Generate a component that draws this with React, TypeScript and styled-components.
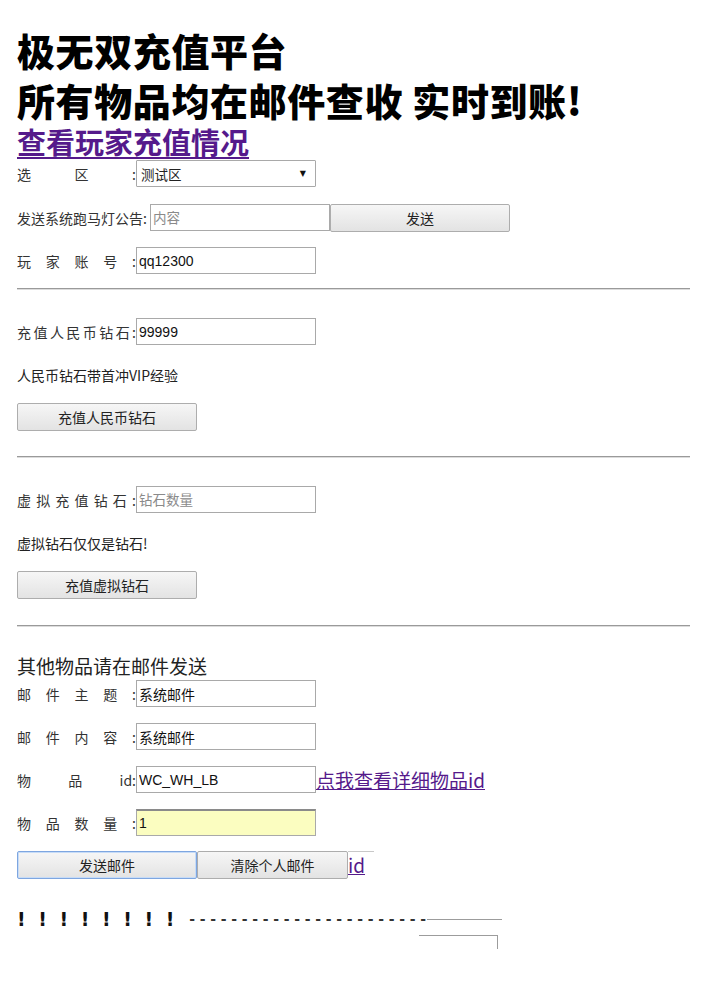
import React from 'react';
import styled, { createGlobalStyle } from 'styled-components';

const GlobalStyle = createGlobalStyle`
  html, body {
    margin: 0;
    padding: 0;
    background: #fff;
  }
  body {
    font-family: "Liberation Sans", "Noto Sans CJK SC", sans-serif;
    color: #222;
  }
`;

const Page = styled.div`
  padding: 25px 16px 40px 17px;
`;

const Title = styled.h1`
  margin: 0;
  font-family: "Noto Sans CJK SC", sans-serif;
  font-size: 38px;
  font-weight: 900;
  line-height: 50px;
  color: #000;
  letter-spacing: 0.6px;
`;

const BigLink = styled.a`
  display: block;
  font-family: "Noto Sans CJK SC", sans-serif;
  font-size: 29px;
  font-weight: 700;
  line-height: 32px;
  color: #551a8b;
  text-decoration: underline;
  text-decoration-thickness: 2px;
  text-underline-offset: 3px;
  width: max-content;
`;

const Row = styled.div<{ $mt: number }>`
  display: flex;
  align-items: center;
  height: 27px;
  margin-top: ${(p) => p.$mt}px;
`;

const Label = styled.span<{ $w?: number }>`
  display: inline-flex;
  justify-content: space-between;
  width: ${(p) => (p.$w ? `${p.$w}px` : '119px')};
  font-family: "Noto Sans CJK SC", sans-serif;
  font-size: 14px;
  color: #333;
  flex-shrink: 0;
  white-space: nowrap;
`;

const Field = styled.input<{ $hl?: boolean }>`
  box-sizing: border-box;
  width: 180px;
  height: 27px;
  margin: 0;
  padding: 1px 2px;
  border: 1px solid #a9a9a9;
  border-top-color: ${(p) => (p.$hl ? '#8a8a8a' : '#a9a9a9')};
  border-top-width: ${(p) => (p.$hl ? '2px' : '1px')};
  background: ${(p) => (p.$hl ? '#fbfdc0' : '#fff')};
  font-family: "Liberation Sans", "Noto Sans CJK SC", sans-serif;
  font-size: 14px;
  color: #111;
  outline: none;
  &::placeholder {
    color: #8a8a8a;
    font-family: "Noto Sans CJK SC", sans-serif;
    font-size: 13.5px;
  }
`;

const Select = styled.div`
  box-sizing: border-box;
  width: 180px;
  height: 27px;
  border: 1px solid #a9a9a9;
  border-radius: 1px;
  display: flex;
  align-items: center;
  justify-content: space-between;
  padding: 0 9px 0 4px;
  font-family: "Noto Sans CJK SC", sans-serif;
  font-size: 13.5px;
  color: #222;
`;

const Arrow = styled.span`
  font-family: "DejaVu Sans", sans-serif;
  font-size: 8px;
  color: #111;
`;

const Button = styled.button<{ $w?: number; $focus?: boolean }>`
  box-sizing: border-box;
  width: ${(p) => (p.$w ? `${p.$w}px` : '180px')};
  height: 28px;
  margin: 0;
  padding: 0;
  border: 1px solid ${(p) => (p.$focus ? '#7ea6e0' : '#adadad')};
  border-radius: 2px;
  background: linear-gradient(#f6f6f6, #e3e3e3);
  box-shadow: ${(p) => (p.$focus ? 'inset 0 0 0 1px #c7dcf7' : 'none')};
  font-family: "Noto Sans CJK SC", sans-serif;
  font-size: 14px;
  color: #222;
  flex-shrink: 0;
`;

const Rule = styled.hr<{ $mt: number; $mb: number }>`
  margin: ${(p) => p.$mt}px 0 ${(p) => p.$mb}px 0;
  border: none;
  border-top: 1px solid #9a9a9a;
  border-bottom: 1px solid #dcdcdc;
  height: 0;
`;

const Note = styled.p<{ $mt: number }>`
  margin: ${(p) => p.$mt}px 0 0 0;
  font-family: "Noto Sans CJK SC", sans-serif;
  font-size: 14px;
  line-height: 20px;
  color: #222;
`;

const SubHead = styled.div`
  margin-top: 27px;
  font-family: "Noto Sans CJK SC", sans-serif;
  font-size: 19px;
  line-height: 24px;
  color: #222;
`;

const SmallLink = styled.a`
  font-family: "Noto Sans CJK SC", sans-serif;
  font-size: 19px;
  color: #551a8b;
  text-decoration: underline;
  white-space: nowrap;
`;

const ClippedLink = styled.a`
  display: inline-block;
  height: 20px;
  overflow: hidden;
  font-family: "Noto Sans CJK SC", sans-serif;
  font-size: 19px;
  line-height: 14px;
  color: #551a8b;
  text-decoration: underline;
  align-self: flex-start;
  padding-top: 6px;
  border-top: 1px solid #c8c8c8;
  padding-right: 9px;
`;

const Shout = styled.div`
  display: flex;
  align-items: center;
  margin-top: 30px;
  height: 22px;
`;

const Bangs = styled.span`
  font-family: "DejaVu Sans", sans-serif;
  font-weight: 700;
  font-size: 19px;
  letter-spacing: 12.6px;
  color: #111;
`;

const Dashes = styled.span`
  font-family: "DejaVu Sans", sans-serif;
  font-weight: 700;
  font-size: 14px;
  letter-spacing: 4.7px;
  color: #333;
  margin-left: 2px;
`;

const Tail = styled.span`
  display: inline-block;
  width: 75px;
  border-top: 1px solid #9c9c9c;
  position: relative;
  margin-left: -4px;
`;

const Ghost = styled.span`
  position: absolute;
  left: -8px;
  top: 15px;
  width: 78px;
  height: 13px;
  border-top: 1px solid #9c9c9c;
  border-right: 1px solid #9c9c9c;
`;

const spaced = (text: string) => text.split(' ').map((c, i) => <span key={i}>{c}</span>);

export default function App() {
  return (
    <Page>
      <GlobalStyle />
      <Title>
        极无双充值平台
        <br />
        所有物品均在邮件查收 实时到账!
      </Title>
      <BigLink href="#">查看玩家充值情况</BigLink>

      <Row $mt={3}>
        <Label>{spaced('选 区 :')}</Label>
        <Select>
          <span>测试区</span>
          <Arrow>▼</Arrow>
        </Select>
      </Row>
      <Row $mt={17}>
        <Label $w={133}>发送系统跑马灯公告:</Label>
        <Field placeholder="内容" />
        <Button>发送</Button>
      </Row>
      <Row $mt={16}>
        <Label>{spaced('玩 家 账 号 :')}</Label>
        <Field defaultValue="qq12300" />
      </Row>

      <Rule $mt={14} $mb={28} />

      <Row $mt={0}>
        <Label>{spaced('充 值 人 民 币 钻 石 :')}</Label>
        <Field defaultValue="99999" />
      </Row>
      <Note $mt={20}>人民币钻石带首冲VIP经验</Note>
      <Row $mt={18}>
        <Button>充值人民币钻石</Button>
      </Row>

      <Rule $mt={26} $mb={28} />

      <Row $mt={0}>
        <Label>{spaced('虚 拟 充 值 钻 石 :')}</Label>
        <Field placeholder="钻石数量" />
      </Row>
      <Note $mt={20}>虚拟钻石仅仅是钻石!</Note>
      <Row $mt={18}>
        <Button>充值虚拟钻石</Button>
      </Row>

      <Rule $mt={27} $mb={0} />

      <SubHead>其他物品请在邮件发送</SubHead>
      <Row $mt={2}>
        <Label>{spaced('邮 件 主 题 :')}</Label>
        <Field defaultValue="系统邮件" />
      </Row>
      <Row $mt={16}>
        <Label>{spaced('邮 件 内 容 :')}</Label>
        <Field defaultValue="系统邮件" />
      </Row>
      <Row $mt={16}>
        <Label>{spaced('物 品 id:')}</Label>
        <Field defaultValue="WC_WH_LB" />
        <SmallLink href="#">点我查看详细物品id</SmallLink>
      </Row>
      <Row $mt={16}>
        <Label>{spaced('物 品 数 量 :')}</Label>
        <Field $hl defaultValue="1" />
      </Row>
      <Row $mt={15}>
        <Button $focus>发送邮件</Button>
        <Button $w={151}>清除个人邮件</Button>
        <ClippedLink href="#">id</ClippedLink>
      </Row>

      <Shout>
        <Bangs>!!!!!!!!</Bangs>
        <Dashes>-----------------------</Dashes>
        <Tail>
          <Ghost />
        </Tail>
      </Shout>
    </Page>
  );
}
